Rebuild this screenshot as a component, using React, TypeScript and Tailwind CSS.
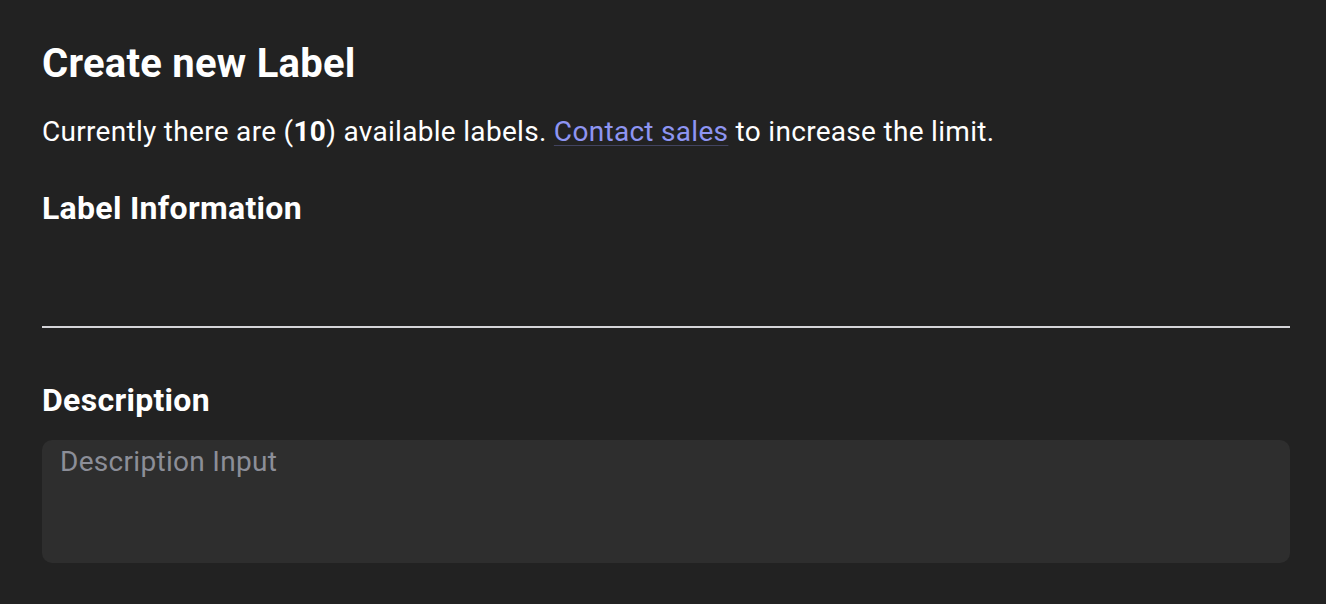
import React from 'react';

const App: React.FC = () => {
  return (
    <div className="min-h-[604px] w-full bg-[#222222] text-white font-['Roboto',sans-serif]">
      <div className="pl-[42px] pr-[36px] pt-[40px]">
        <h1 className="text-[40px] leading-[48px] font-bold tracking-[0.25px]">Create new Label</h1>
        <p className="mt-[26px] text-[28px] leading-[36px] tracking-[0.3px]">
          Currently there are (<span className="font-bold">10</span>) available labels.{' '}
          <a
            href="#"
            className="text-[#8e95f2] underline decoration-[#8e95f2]/30 decoration-1 underline-offset-[4px]"
          >
            Contact sales
          </a>{' '}
          to increase the limit.
        </p>

        <h2 className="mt-[38px] text-[32px] leading-[40px] font-bold tracking-[0.3px]">Label Information</h2>
        <input
          type="text"
          className="block w-full h-[100px] bg-transparent border-b-2 border-[#d4d4d8] outline-none text-[28px]"
        />

        <h2 className="mt-[52px] text-[32px] leading-[40px] font-bold tracking-[0.3px]">Description</h2>
        <textarea
          placeholder="Description Input"
          className="mt-[20px] block w-full h-[123px] resize-none rounded-[10px] bg-[#2e2e2e] px-[18px] pt-[4px] text-[28px] leading-[36px] tracking-[0.3px] text-white placeholder:text-[#8c8e98] outline-none"
        />
      </div>
    </div>
  );
};

export default App;
